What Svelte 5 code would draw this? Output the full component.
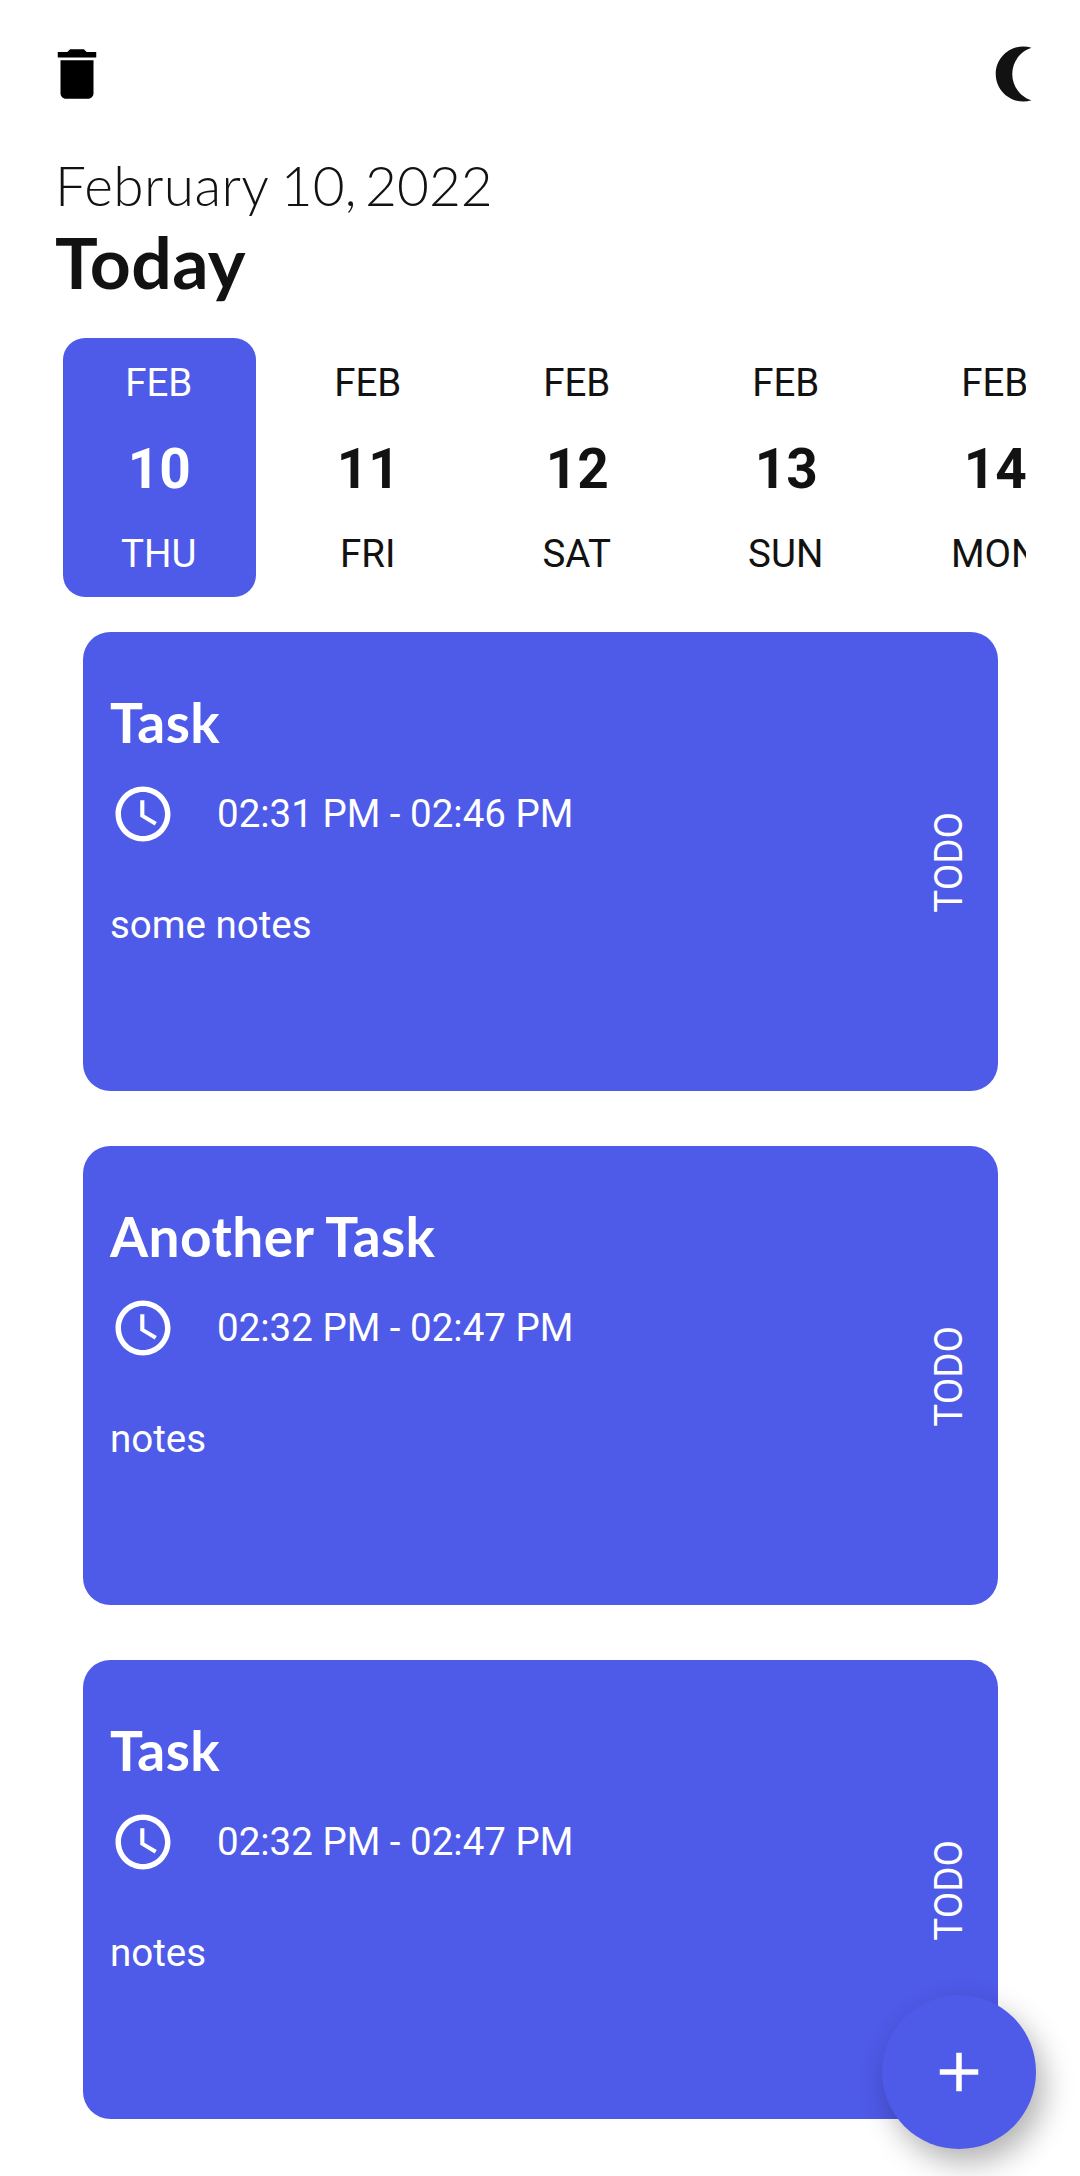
<script>
  const today = ['February', '10,', '2022'];
  const days = [
    { month: 'FEB', date: 10, name: 'THU' },
    { month: 'FEB', date: 11, name: 'FRI' },
    { month: 'FEB', date: 12, name: 'SAT' },
    { month: 'FEB', date: 13, name: 'SUN' },
    { month: 'FEB', date: 14, name: 'MON' }
  ];
  const tasks = [
    { title: 'Task', time: '02:31 PM - 02:46 PM', note: 'some notes' },
    { title: 'Another Task', time: '02:32 PM - 02:47 PM', note: 'notes' },
    { title: 'Task', time: '02:32 PM - 02:47 PM', note: 'notes' }
  ];
  let selected = $state(10);
</script>

<div class="screen">
  <header class="bar">
    <svg class="icon" viewBox="0 0 24 24" aria-label="Delete all">
      <path fill="#000" d="M6 19c0 1.1.9 2 2 2h8c1.1 0 2-.9 2-2V7H6v12zM19 4h-3.5l-1-1h-5l-1 1H5v2h14V4z" />
    </svg>
    <svg class="icon" viewBox="0 0 24 24" aria-label="Dark mode">
      <path
        fill="#121212"
        transform="translate(24 0) scale(-1 1)"
        d="M9 2c-1.05 0-2.05.16-3 .46 4.06 1.27 7 5.06 7 9.54 0 4.48-2.94 8.27-7 9.54.95.3 1.95.46 3 .46 5.52 0 10-4.48 10-10S14.52 2 9 2z"
      />
    </svg>
  </header>

  <section class="heading">
    <div class="date">
      {#each today as word}<span>{word}</span>{' '}{/each}
    </div>
    <div class="today">Today</div>
  </section>

  <div class="days">
    {#each days as day}
      <button class="day" class:active={day.date === selected} onclick={() => (selected = day.date)}>
        <span>{day.month}</span>
        <span class="number">{day.date}</span>
        <span>{day.name}</span>
      </button>
    {/each}
  </div>

  <main class="tasks">
    {#each tasks as task}
      <article class="card">
        <div class="body">
          <div class="title">{task.title}</div>
          <div class="time">
            <svg class="icon" viewBox="0 0 24 24" aria-hidden="true">
              <path
                fill="#fff"
                d="M11.99 2C6.47 2 2 6.48 2 12s4.47 10 9.99 10C17.52 22 22 17.52 22 12S17.52 2 11.99 2zM12 20c-4.42 0-8-3.58-8-8s3.58-8 8-8 8 3.58 8 8-3.58 8-8 8z"
              />
              <path fill="#fff" d="M12.5 7H11v6l5.25 3.15.75-1.23-4.5-2.67z" />
            </svg>
            <span>{task.time}</span>
          </div>
          <div class="note">{task.note}</div>
        </div>
        <div class="status">TODO</div>
      </article>
    {/each}
  </main>

  <button class="fab" aria-label="Add task">
    <svg class="icon" viewBox="0 0 24 24"><path fill="#fff" d="M19 13h-6v6h-2v-6H5v-2h6V5h2v6h6v2z" /></svg>
  </button>
</div>

<style>
  :global(body) {
    background: #fff;
  }
  .screen {
    position: relative;
    width: 1080px;
    height: 2176px;
    overflow: hidden;
    background: #fff;
    color: #121212;
    font: 400 38.5px/46px Roboto, sans-serif;
  }
  .icon {
    display: block;
    flex: none;
    width: 66px;
    height: 66px;
  }
  .bar {
    display: flex;
    justify-content: space-between;
    height: 152px;
    box-sizing: border-box;
    padding: 41px 31.7px 0 43.6px;
  }
  .heading {
    padding-left: 55px;
    font-family: Lato, sans-serif;
    letter-spacing: 0.4px;
  }
  .date {
    display: flex;
    gap: 11.5px;
    font-size: 55px;
    line-height: 66px;
    font-weight: 300;
  }
  .date span + span {
    letter-spacing: 0;
  }
  .date span:last-child {
    margin-left: -3px;
  }
  .today {
    font-size: 71.5px;
    line-height: 86px;
    font-weight: 700;
  }
  .days {
    display: flex;
    gap: 16.5px;
    margin: 34px 54.5px 0 55px;
    padding-left: 8px;
    overflow: hidden;
  }
  .day {
    display: flex;
    flex: none;
    flex-direction: column;
    align-items: center;
    justify-content: space-between;
    width: 192.5px;
    height: 259px;
    padding: 22px 0 20px;
    border: 0;
    border-radius: 22px;
    background: none;
    color: inherit;
    font: inherit;
  }
  .day span {
    margin-left: -1px;
  }
  .day .number {
    margin-left: 0;
    font-size: 55px;
    line-height: 64px;
    font-weight: 700;
  }
  .day.active {
    background: #4e5ae8;
    color: #fff;
  }
  .tasks {
    display: flex;
    flex-direction: column;
    gap: 55px;
    padding: 35px 82.5px 0;
  }
  .card {
    display: flex;
    align-items: center;
    justify-content: space-between;
    height: 459px;
    padding: 1px 25.5px 0 27.5px;
    box-sizing: border-box;
    border-radius: 27.5px;
    background: #4e5ae8;
    color: #fff;
  }
  .body {
    align-self: flex-start;
    padding-top: 56px;
  }
  .title {
    font: 700 55px/66px Lato, sans-serif;
    letter-spacing: 0.4px;
  }
  .time {
    display: flex;
    align-items: center;
    gap: 41px;
    margin: 25.5px 0 55px;
  }
  .status {
    writing-mode: vertical-rl;
    transform: rotate(180deg);
  }
  .fab {
    position: absolute;
    right: 44px;
    bottom: 27.5px;
    display: flex;
    align-items: center;
    justify-content: center;
    width: 154px;
    height: 154px;
    padding: 0;
    border: 0;
    border-radius: 50%;
    background: #4e5ae8;
    box-shadow: 8px 14px 30px rgba(0, 0, 0, 0.3);
  }
</style>
